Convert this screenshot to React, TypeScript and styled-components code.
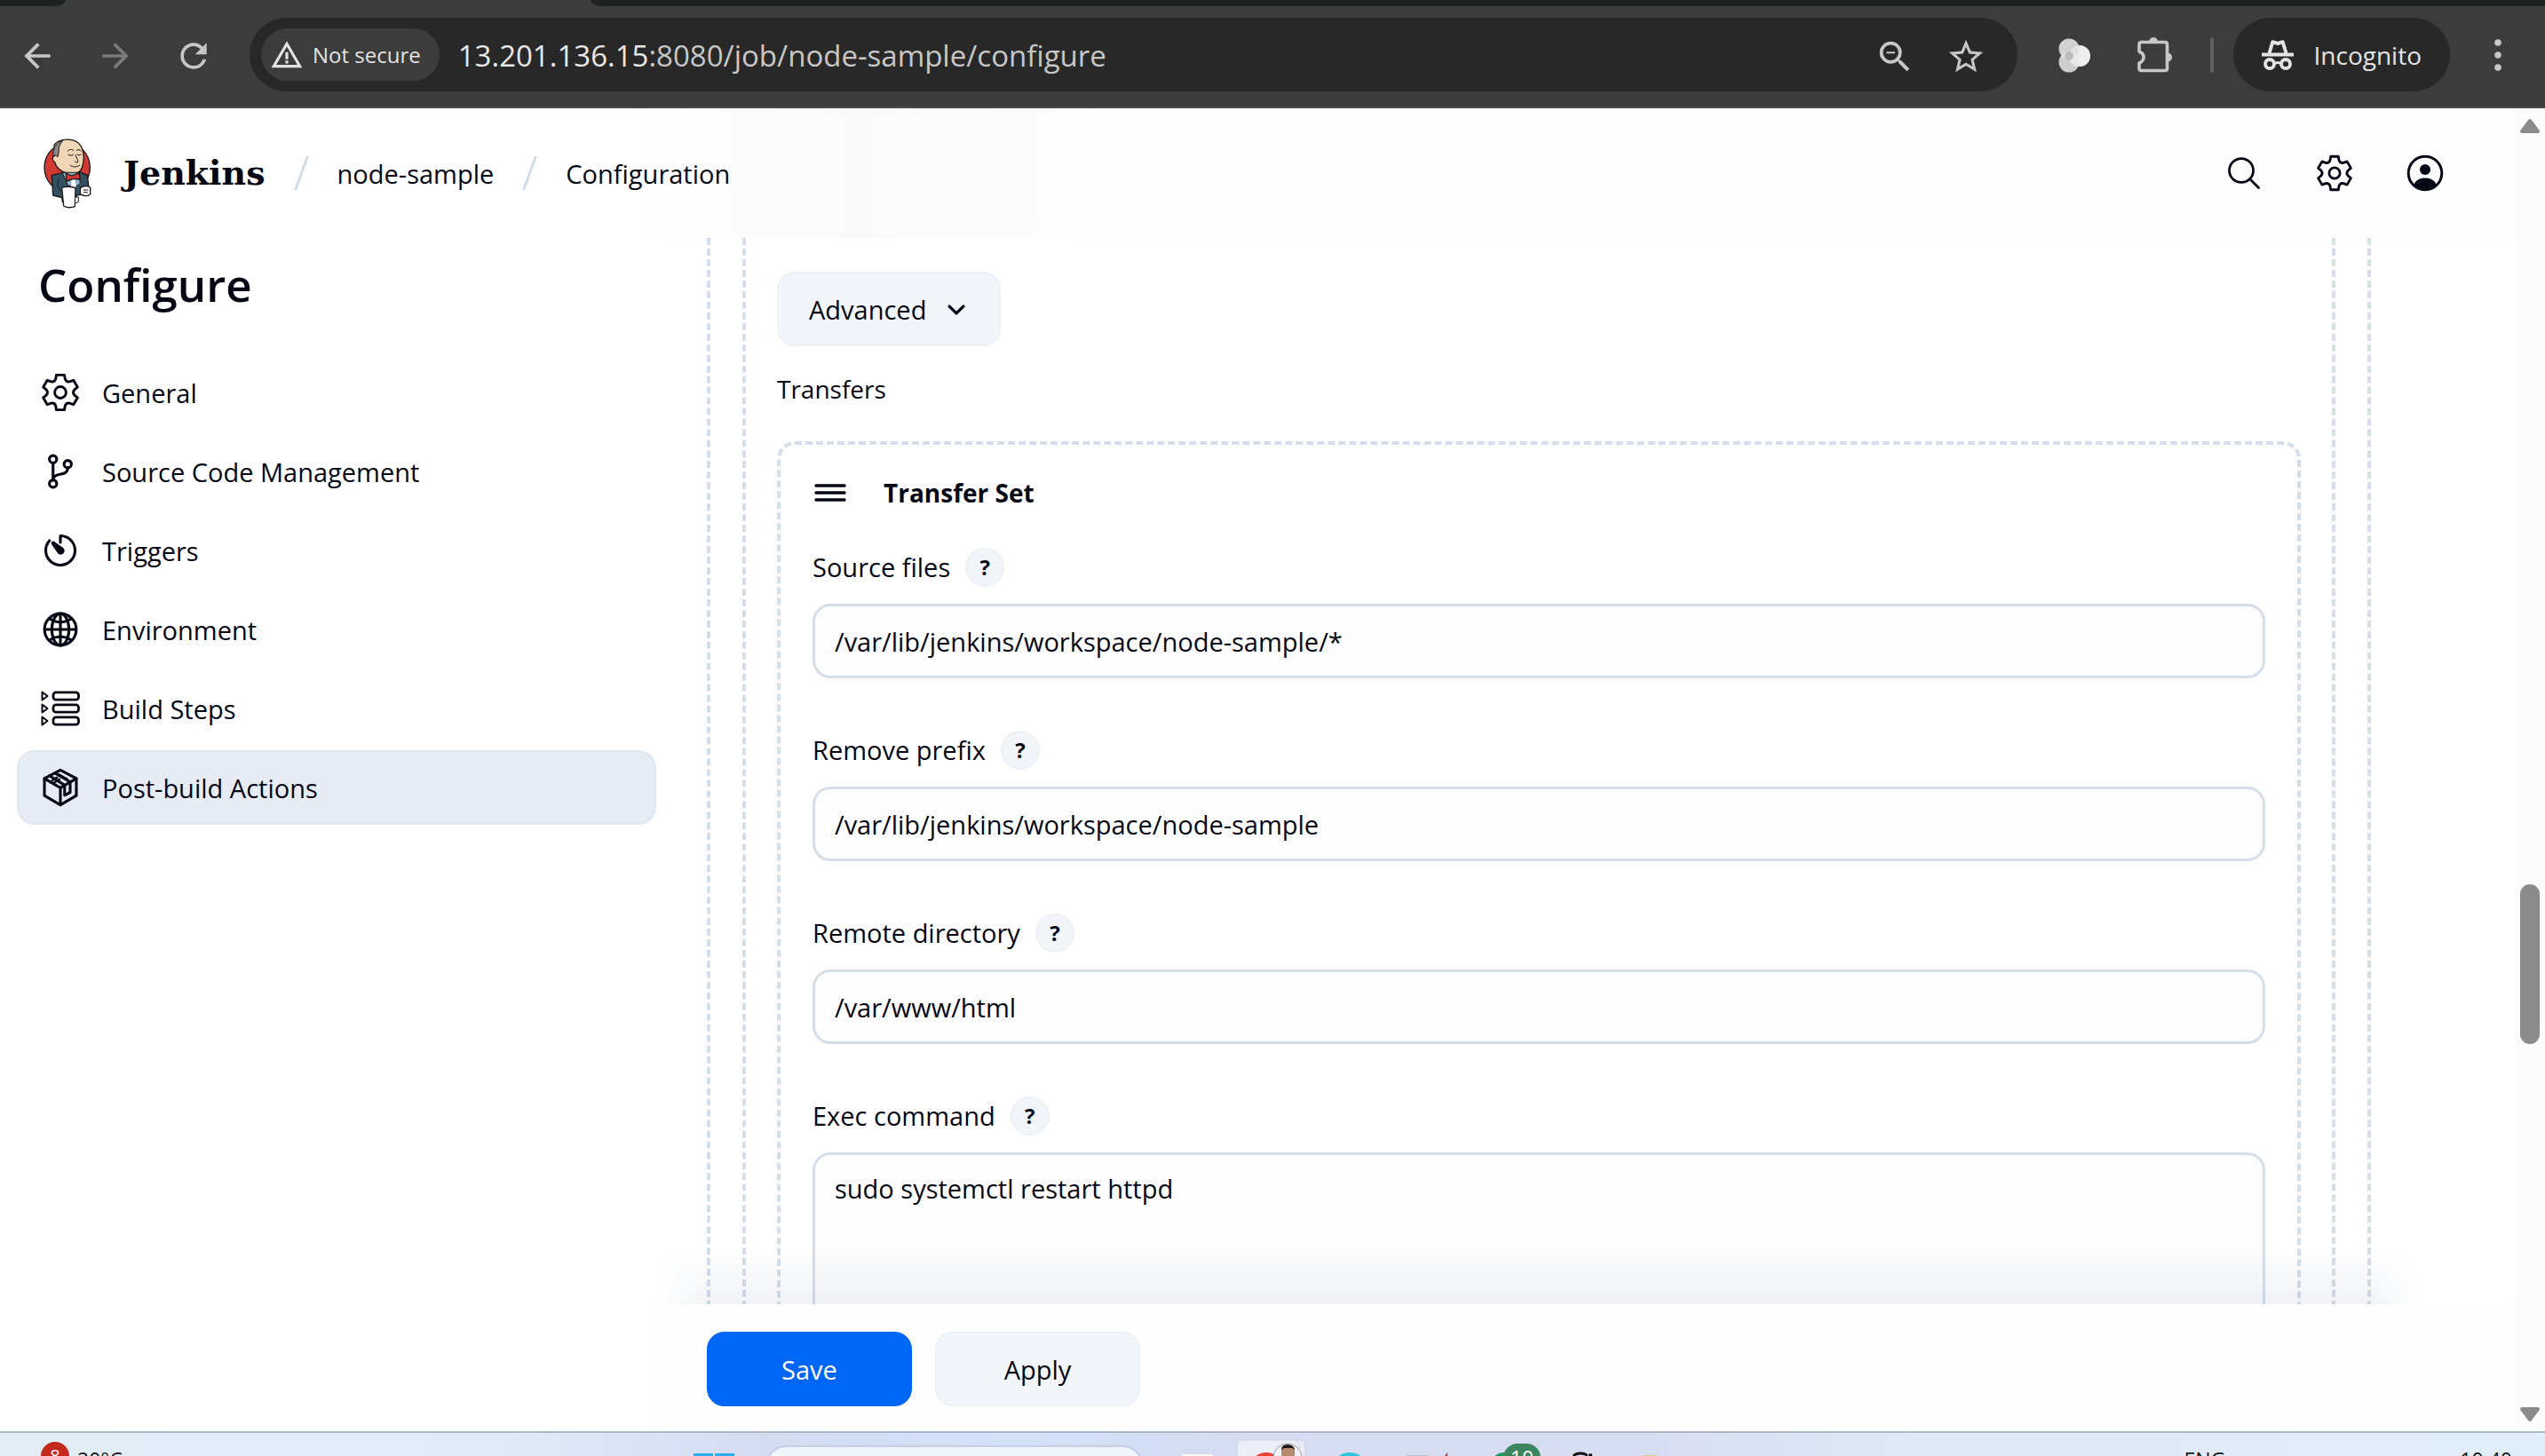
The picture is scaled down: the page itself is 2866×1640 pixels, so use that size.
import React, { useState } from "react";
import styled, { createGlobalStyle, css } from "styled-components";
import {
  IoChevronDownOutline,
  IoGitBranchOutline,
  IoGlobeOutline,
  IoSearchOutline,
  IoTimerOutline,
} from "react-icons/io5";
import {
  MdArrowBack,
  MdArrowForward,
  MdOutlineZoomOut,
  MdRefresh,
  MdStarBorder,
  MdWarningAmber,
} from "react-icons/md";

const ink = "#060714";
const line = "#d6deea";
const soft = "#f2f6fa";
const softEdge = "#edf1f5";
const sans = `"Open Sans", "Noto Sans", sans-serif`;

const GlobalStyle = createGlobalStyle`
  *, *::before, *::after { box-sizing: border-box; }
  body { margin: 0; background: #fff; color: ${ink}; font: 400 29px/44px ${sans}; }
  button, input, textarea { font: inherit; color: inherit; margin: 0; }
  button { border: 0; padding: 0; background: none; cursor: pointer; }
  a { color: inherit; text-decoration: none; }
  h1, h2, p { margin: 0; }
  svg { display: block; flex: none; }
`;

const Screen = styled.div`
  display: flex;
  flex-direction: column;
  height: 100vh;
  overflow: hidden;
`;

/* ---------- browser chrome ---------- */

const TabStrip = styled.div`
  flex: none;
  display: flex;
  justify-content: space-between;
  height: 7px;
  background: #3c3c3c;
`;
const TabEdge = styled.div<{ $side: "left" | "right" }>`
  background: #1f2120;
  ${(p) =>
    p.$side === "left"
      ? css`width: 74px; border-bottom-right-radius: 14px 7px;`
      : css`width: calc(100% - 665px); border-bottom-left-radius: 14px 7px;`}
`;
const Toolbar = styled.header`
  flex: none;
  display: flex;
  align-items: center;
  height: 115px;
  padding: 0 32px 4px 20px;
  background: #3c3c3c;
  border-bottom: 2px solid #484848;
  color: #c7c7c7;
`;
const NavButtons = styled.div`
  display: flex;
  gap: 46px;
  width: 261px;
`;
const ChromeButton = styled.button<{ $dim?: boolean }>`
  display: grid;
  place-items: center;
  width: 42px;
  height: 42px;
  color: ${(p) => (p.$dim ? "#7a7a7a" : "#c7c7c7")};
`;
const Omnibox = styled.div`
  flex: 1;
  display: flex;
  align-items: center;
  height: 83px;
  padding: 0 39px 0 13px;
  border-radius: 42px;
  background: #282828;
`;
const SecurityChip = styled.button`
  display: flex;
  align-items: center;
  gap: 10px;
  height: 59px;
  padding: 0 21px 0 10px;
  border-radius: 30px;
  background: #3c3c3c;
  color: #e3e3e3;
  font-size: 24px;
  font-weight: 500;
`;
const Url = styled.p`
  flex: 1;
  margin-left: 21px;
  padding-top: 2px;
  font-size: 33px;
  color: #c7c7c7;
  b { font-weight: 400; color: #e8e8e8; }
`;
const OmniActions = styled.div`
  display: flex;
  gap: 38px;
`;
const Extensions = styled.div`
  display: flex;
  align-items: center;
  gap: 48px;
  margin-left: 43px;
`;
const Divider = styled.span`
  width: 4px;
  height: 40px;
  margin: 0 22px 0 42px;
  border-radius: 2px;
  background: #5f5f5f;
`;
const IncognitoPill = styled.div`
  display: flex;
  align-items: center;
  gap: 22px;
  height: 83px;
  padding: 0 32px;
  margin-right: 33px;
  border-radius: 42px;
  background: #282828;
  color: #e3e3e3;
  font-size: 28px;
`;

/* ---------- page ---------- */

const Viewport = styled.div`
  flex: 1;
  min-height: 0;
  display: flex;
`;
const Page = styled.div`
  flex: 1;
  min-width: 0;
  display: flex;
  flex-direction: column;
`;
const PageHeader = styled.header`
  flex: none;
  display: flex;
  align-items: center;
  justify-content: space-between;
  height: 146px;
  padding: 0 78px 0 47px;
  background: linear-gradient(90deg, #fff 25%, #fafafa 34%, #fbfbfb 38%, #fefefe 44%);
`;
const Crumbs = styled.nav`
  display: flex;
  align-items: center;
`;
const Brand = styled.a`
  display: flex;
  align-items: center;
  gap: 35px;
  font: 700 38px/44px "DejaVu Serif", serif;
`;
const Crumb = styled.a`
  padding-top: 2px;
`;
const Slash = styled.span`
  width: 3px;
  height: 38px;
  margin: 0 39px;
  background: #d0dbe8;
  transform: skewX(-20deg);
`;
const HeaderActions = styled.div`
  display: flex;
  gap: 58px;
`;
const IconButton = styled.button`
  display: grid;
  place-items: center;
  width: 44px;
  height: 44px;
`;

const Columns = styled.div`
  flex: 1;
  min-height: 0;
  display: flex;
`;
const Sidebar = styled.aside`
  flex: none;
  width: 739px;
  padding: 16px 0 0 19px;
`;
const Title = styled.h1`
  padding-left: 24px;
  font-size: 51px;
  line-height: 72px;
  font-weight: 600;
`;
const TaskList = styled.nav`
  display: grid;
  gap: 5px;
  margin-top: 44px;
`;
const Task = styled.a<{ $active: boolean }>`
  display: flex;
  align-items: center;
  gap: 25px;
  height: 84px;
  padding: 0 25px;
  border: 2px solid ${(p) => (p.$active ? "#e2e7ef" : "transparent")};
  border-radius: 20px;
  background: ${(p) => (p.$active ? "#e7ecf4" : "transparent")};
  svg[stroke-width="0"] * { stroke-width: 36px !important; }
`;
const TaskName = styled.span`
  padding-top: 2px;
`;

const Main = styled.main`
  flex: 1;
  min-width: 0;
  display: flex;
  flex-direction: column;
`;
const Scroller = styled.div`
  flex: 1;
  min-height: 0;
  overflow: hidden;
  padding: 0 161px 0 57px;
`;
const Nest = styled.div`
  padding: 0 36px;
  border: 0 dashed ${line};
  border-width: 0 4px;
`;
const Publisher = styled.section`
  padding: 38px 35px 0;
  height: 1600px;
  border: 0 dashed ${line};
  border-width: 0 4px;
`;
const SoftButton = styled.button`
  display: flex;
  align-items: center;
  justify-content: center;
  gap: 20px;
  height: 84px;
  padding: 2px 34px 0;
  border: 2px solid ${softEdge};
  border-radius: 20px;
  background: ${soft};
  svg * { stroke-width: 60px !important; }
`;
const SectionLabel = styled.h2`
  margin-top: 26px;
  font-size: 28px;
  line-height: 44px;
  font-weight: 400;
`;
const TransferSet = styled.fieldset`
  min-width: 0;
  height: 1400px;
  margin: 37px 0 0;
  padding: 32px 36px 0;
  border: 4px dashed ${line};
  border-radius: 20px;
`;
const SetHeader = styled.div`
  display: flex;
  align-items: center;
  gap: 42px;
  margin-bottom: 40px;
  padding-left: 2px;
  font-weight: 700;
  font-size: 28px;
`;
const Field = styled.div`
  display: grid;
  gap: 19px;
  margin-bottom: 59px;
`;
const LabelRow = styled.div`
  display: flex;
  align-items: center;
  gap: 17px;
`;
const Help = styled.button`
  width: 44px;
  height: 44px;
  border: 2px solid ${softEdge};
  border-radius: 50%;
  background: ${soft};
  font-size: 24px;
  line-height: 36px;
  font-weight: 700;
`;
const box = css`
  display: block;
  width: 100%;
  border: 3px solid ${line};
  border-radius: 20px;
  background: #fdfdfd;
  outline: none;
`;
const TextBox = styled.input`
  ${box}
  height: 84px;
  padding: 0 22px;
`;
const TextArea = styled.textarea`
  ${box}
  height: 260px;
  padding: 16px 22px;
  resize: none;
`;
const BottomBar = styled.div`
  position: relative;
  flex: none;
  display: flex;
  gap: 26px;
  padding: 31px 57px 28px;
  background: #fefefe;
  &::before {
    content: "";
    position: absolute;
    left: 0;
    right: 104px;
    bottom: 100%;
    height: 66px;
    pointer-events: none;
    background: linear-gradient(to top, rgba(60, 80, 140, 0.07), rgba(60, 80, 140, 0));
    mask-image: linear-gradient(90deg, transparent, #000 64px, #000 calc(100% - 64px), transparent);
  }
`;
const FormButton = styled.button<{ $primary?: boolean }>`
  width: 231px;
  height: 84px;
  padding-top: 2px;
  border: 2px solid ${(p) => (p.$primary ? "#0066f5" : softEdge)};
  border-radius: 20px;
  background: ${(p) => (p.$primary ? "#0066f5" : soft)};
  color: ${(p) => (p.$primary ? "#fff" : ink)};
`;

const ScrollTrack = styled.div`
  flex: none;
  display: flex;
  flex-direction: column;
  align-items: center;
  justify-content: space-between;
  width: 35px;
  padding: 11px 0 10px;
  background: #fcfcfc;
`;
const Rail = styled.div`
  flex: 1;
  display: flex;
  flex-direction: column;
  width: 22px;
  &::before { content: ""; flex: 845 0 0; }
  &::after { content: ""; flex: 408 0 0; }
`;
const Thumb = styled.div`
  flex: 180 0 0;
  border-radius: 11px;
  background: #8b8b8b;
`;

/* ---------- taskbar ---------- */

const Taskbar = styled.footer`
  flex: none;
  display: flex;
  justify-content: space-between;
  height: 28px;
  overflow: hidden;
  border-top: 2px solid #aeb7c5;
  background: linear-gradient(90deg, #e2edf6 0%, #e0ebf6 20%, #d5dcf2 30%, #d2e2f8 40%, #d6dcf1 48%, #d8def1 65%, #dfe9f4 75%, #e1edf8 100%);
  color: #1a1a1a;
  font-size: 23px;
  line-height: 32px;
`;
const Weather = styled.div`
  display: flex;
  gap: 9px;
  width: 761px;
  padding: 10px 0 0 46px;
`;
const Badge = styled.span<{ $color: string }>`
  flex: none;
  width: 32px;
  height: 32px;
  border-radius: 16px;
  background: ${(p) => p.$color};
  color: #fff;
  font-size: 20px;
  text-align: center;
`;
const Temp = styled.span`
  padding-top: 4px;
`;
const Dock = styled.div`
  display: flex;
  gap: 14px;
`;
const Apps = styled.div`
  display: flex;
`;
const Slot = styled.div`
  position: relative;
  width: 87px;
`;
const CountBadge = styled(Badge)`
  position: absolute;
  left: 43px;
  top: 12px;
  width: 42px;
  font-size: 23px;
`;
const SearchPill = styled.div`
  width: 426px;
  height: 60px;
  margin-top: 14px;
  border: 2px solid #c5cfe6;
  border-radius: 24px;
  background: #f1f6fd;
`;
const Tray = styled.div`
  flex: 1;
  display: flex;
  justify-content: flex-end;
  gap: 264px;
  padding: 14px 37px 0 0;
`;

/* ---------- drawings ---------- */

const gearPath = (() => {
  const at = (deg: number, r: number) => {
    const a = (deg * Math.PI) / 180;
    return `${(12 + r * Math.sin(a)).toFixed(2)} ${(12 - r * Math.cos(a)).toFixed(2)}`;
  };
  let d = "";
  for (let i = 0; i < 6; i++) {
    const a = i * 60;
    d += `${i ? "L" : "M"}${at(a - 13, 11)}L${at(a + 13, 11)}L${at(a + 19, 8.8)}Q${at(a + 30, 7.2)} ${at(a + 41, 8.8)}`;
  }
  return d + "Z";
})();

const Gear = ({ size }: { size: number }) => (
  <svg width={size} height={size} viewBox="0 0 24 24" fill="none" stroke="currentColor" strokeWidth="1.6" strokeLinejoin="round">
    <path d={gearPath} />
    <circle cx="12" cy="12" r="3.5" />
  </svg>
);

const Steps = () => (
  <svg width="44" height="44" viewBox="0 0 44 44" fill="none" stroke="currentColor" strokeWidth="2.8" strokeLinejoin="round">
    {[8, 22, 36].map((y) => (
      <g key={y}>
        <path d={`M1.5 ${y - 4.5}V${y + 4.5}L7.5 ${y}Z`} strokeWidth="2" />
        <rect x="14" y={y - 4.2} width="28.5" height="8.4" rx="3" />
      </g>
    ))}
  </svg>
);

const Package = () => (
  <svg width="44" height="44" viewBox="0 0 24 24" fill="none" stroke="currentColor" strokeWidth="1.7" strokeLinejoin="round" strokeLinecap="round">
    <path d="M12 1.3 21.8 6.5V17L12 22.7 2.2 17V6.5Z" />
    <path d="M2.2 6.5 12 12.2 21.8 6.5M12 12.2V22.7" />
    <path d="M5.3 4.8 14.6 10.6V16.8L18 15V8.6L8.6 3.1" />
    <path d="M7 7.6 10 5.8M11.3 4.1 16.3 7M8.4 8.9 11.5 7" strokeWidth="1.3" />
  </svg>
);

const Person = () => (
  <svg width="42" height="42" viewBox="0 0 42 42">
    <circle cx="21" cy="21" r="18.8" fill="none" stroke="currentColor" strokeWidth="3" />
    <circle cx="21" cy="17" r="6" fill="currentColor" />
    <path d="M8.5 34C10 29 15 26.500 21 26.500S32 29 33.500 34A19 19 0 0 1 8.500 34Z" fill="currentColor" />
  </svg>
);

const Menu = () => (
  <svg width="36" height="22" viewBox="0 0 36 22" stroke="currentColor" strokeWidth="3.4" strokeLinecap="round">
    <path d="M2 3H34M2 11H34M2 19H34" />
  </svg>
);

const Butler = () => (
  <svg width="57" height="79" viewBox="50 48 171 237" strokeLinejoin="round" strokeLinecap="round">
    <ellipse cx="136" cy="146" rx="77" ry="82" fill="#d33833" stroke="#1d1919" strokeWidth="4" />
    <path d="M84 172 122 164 176 160 204 172 208 206 190 236 168 240 166 262 120 262 118 248 88 240Z" fill="#335061" stroke="#1d1919" strokeWidth="4" />
    <path d="M92 70C108 46 166 42 184 76C194 100 194 124 186 146C178 166 158 172 140 168C116 162 98 146 94 128C84 122 84 108 94 106Z" fill="#f0d6b7" stroke="#1d1919" strokeWidth="4" />
    <path d="M88 108C88 82 96 62 122 54C112 66 106 78 108 92L104 110C98 104 92 104 88 108Z" fill="#8a8786" stroke="#1d1919" strokeWidth="3" />
    <path d="M140 102C144 106 150 107 156 103M170 102C174 105 178 105 182 102M164 104C168 114 174 124 172 128C168 130 164 128 162 126M146 138C154 146 168 146 178 138M138 90C144 84 152 84 157 88M168 88C174 84 180 86 182 90" fill="none" stroke="#1d1919" strokeWidth="3" />
    <path d="M120 164 138 206 160 214 180 200 176 164Z" fill="#8fb4cf" stroke="#1d1919" strokeWidth="3" />
    <path d="M150 184 162 184 166 212 150 210Z" fill="#fff" />
    <path d="M132 166 152 174 176 164 180 186 158 184 134 192Z" fill="#d33833" stroke="#1d1919" strokeWidth="4" />
    <path d="M118 214C130 210 154 210 164 216L162 278C150 282 134 282 124 276Z" fill="#fff" stroke="#1d1919" strokeWidth="4" />
    <path d="M180 216C190 206 212 206 214 216L214 236C206 246 190 242 180 236Z" fill="#fff" stroke="#1d1919" strokeWidth="4" />
    <path d="M164 246H174V262L164 266" fill="#fff" stroke="#1d1919" strokeWidth="3" />
    <path d="M192 222H206M192 230H204M106 184C102 200 104 220 116 226" fill="none" stroke="#1d1919" strokeWidth="3" />
  </svg>
);

const Blob = () => (
  <svg width="42" height="42" viewBox="0 0 42 42">
    <circle cx="27" cy="22" r="12" fill="#efefef" />
    <circle cx="15" cy="14" r="11.500" fill="#dedede" fillOpacity="0.92" />
    <circle cx="15" cy="29" r="11.500" fill="#e8e8e8" fillOpacity="0.85" />
    <circle cx="15" cy="22" r="5" fill="#bdbdbd" />
  </svg>
);

const Puzzle = () => (
  <svg width="42" height="42" viewBox="0 0 42 42">
    <path d="M4 17V9Q4 6.500 6.500 6.500H33Q35.500 6.500 35.500 9V36Q35.500 38.500 33 38.500H6.500Q4 38.500 4 36V30Q9 28 9 23.500T4 17Z" fill="none" stroke="currentColor" strokeWidth="3.600" strokeLinejoin="round" />
    <path d="M15 6A5 5 0 0 1 25 6ZM36 18.500A5 5 0 0 1 36 28.500Z" fill="currentColor" />
  </svg>
);

const Incognito = () => (
  <svg width="36" height="36" viewBox="0 0 36 36" fill="none" stroke="currentColor">
    <path d="M8.500 16 12.300 3.200 18 5 23.700 3.200 27.500 16" strokeWidth="4" strokeLinejoin="round" />
    <path d="M0 17.500H36" strokeWidth="4" />
    <circle cx="9" cy="28" r="5" strokeWidth="3.800" />
    <circle cx="27" cy="28" r="5" strokeWidth="3.800" />
    <path d="M14 28Q18 25 22 28" strokeWidth="3" />
  </svg>
);

const Kebab = () => (
  <svg width="8" height="38" viewBox="0 0 8 38" fill="currentColor">
    <circle cx="4" cy="5" r="3.800" />
    <circle cx="4" cy="19" r="3.800" />
    <circle cx="4" cy="33" r="3.800" />
  </svg>
);

const Arrow = ({ down }: { down?: boolean }) => (
  <svg width="24" height="18" viewBox="0 0 24 18" fill="#8b8b8b" stroke="#8b8b8b" strokeWidth="4" strokeLinejoin="round">
    <path d={down ? "M3 3H21L12 15Z" : "M3 15H21L12 3Z"} />
  </svg>
);

const Art = ({ children }: { children: React.ReactNode }) => (
  <svg width="87" height="26" viewBox="0 0 87 26">{children}</svg>
);

/* ---------- content ---------- */

const tasks = [
  { name: "General", icon: <Gear size={44} /> },
  { name: "Source Code Management", icon: <IoGitBranchOutline size={44} /> },
  { name: "Triggers", icon: <IoTimerOutline size={44} /> },
  { name: "Environment", icon: <IoGlobeOutline size={44} /> },
  { name: "Build Steps", icon: <Steps /> },
  { name: "Post-build Actions", icon: <Package /> },
];

const fields = [
  { id: "sourceFiles", label: "Source files", value: "/var/lib/jenkins/workspace/node-sample/*" },
  { id: "removePrefix", label: "Remove prefix", value: "/var/lib/jenkins/workspace/node-sample" },
  { id: "remoteDirectory", label: "Remote directory", value: "/var/www/html" },
  { id: "execCommand", label: "Exec command", value: "sudo systemctl restart httpd", multiline: true },
];

export default function App() {
  const [active, setActive] = useState("Post-build Actions");

  return (
    <Screen>
      <GlobalStyle />
      <TabStrip>
        <TabEdge $side="left" />
        <TabEdge $side="right" />
      </TabStrip>
      <Toolbar>
        <NavButtons>
          <ChromeButton aria-label="Back"><MdArrowBack size={44} /></ChromeButton>
          <ChromeButton aria-label="Forward" $dim><MdArrowForward size={44} /></ChromeButton>
          <ChromeButton aria-label="Reload"><MdRefresh size={44} /></ChromeButton>
        </NavButtons>
        <Omnibox>
          <SecurityChip><MdWarningAmber size={38} />Not secure</SecurityChip>
          <Url><b>13.201.136.15</b>:8080/job/node-sample/configure</Url>
          <OmniActions>
            <ChromeButton aria-label="Zoom"><MdOutlineZoomOut size={46} /></ChromeButton>
            <ChromeButton aria-label="Bookmark"><MdStarBorder size={46} /></ChromeButton>
          </OmniActions>
        </Omnibox>
        <Extensions>
          <ChromeButton aria-label="Extension"><Blob /></ChromeButton>
          <ChromeButton aria-label="Extensions"><Puzzle /></ChromeButton>
        </Extensions>
        <Divider />
        <IncognitoPill><Incognito />Incognito</IncognitoPill>
        <ChromeButton aria-label="Menu"><Kebab /></ChromeButton>
      </Toolbar>

      <Viewport>
        <Page>
          <PageHeader>
            <Crumbs>
              <Brand href="#"><Butler />Jenkins</Brand>
              <Slash />
              <Crumb href="#node-sample">node-sample</Crumb>
              <Slash />
              <Crumb href="#configuration">Configuration</Crumb>
            </Crumbs>
            <HeaderActions>
              <IconButton aria-label="Search"><IoSearchOutline size={44} /></IconButton>
              <IconButton aria-label="Manage"><Gear size={42} /></IconButton>
              <IconButton aria-label="Account"><Person /></IconButton>
            </HeaderActions>
          </PageHeader>

          <Columns>
            <Sidebar>
              <Title>Configure</Title>
              <TaskList>
                {tasks.map((t) => (
                  <Task key={t.name} href="#" $active={t.name === active} onClick={() => setActive(t.name)}>
                    {t.icon}
                    <TaskName>{t.name}</TaskName>
                  </Task>
                ))}
              </TaskList>
            </Sidebar>

            <Main>
              <Scroller>
                <Nest>
                  <Publisher>
                    <SoftButton>Advanced<IoChevronDownOutline size={28} /></SoftButton>
                    <SectionLabel>Transfers</SectionLabel>
                    <TransferSet>
                      <SetHeader><Menu />Transfer Set</SetHeader>
                      {fields.map((f) => (
                        <Field key={f.id}>
                          <LabelRow>
                            <label htmlFor={f.id}>{f.label}</label>
                            <Help aria-label={`Help for ${f.label}`}>?</Help>
                          </LabelRow>
                          {f.multiline ? (
                            <TextArea id={f.id} defaultValue={f.value} />
                          ) : (
                            <TextBox id={f.id} defaultValue={f.value} />
                          )}
                        </Field>
                      ))}
                    </TransferSet>
                  </Publisher>
                </Nest>
              </Scroller>
              <BottomBar>
                <FormButton $primary>Save</FormButton>
                <FormButton>Apply</FormButton>
              </BottomBar>
            </Main>
          </Columns>
        </Page>
        <ScrollTrack>
          <Arrow />
          <Rail><Thumb /></Rail>
          <Arrow down />
        </ScrollTrack>
      </Viewport>

      <Taskbar>
        <Weather>
          <Badge $color="#c42b1c">8</Badge>
          <Temp>20°C</Temp>
        </Weather>
        <Dock>
          <Slot>
            <Art><path d="M20 23H42V26H20ZM44 23H66V26H44Z" fill="#2eaef0" /></Art>
          </Slot>
          <SearchPill />
          <Apps>
            <Slot><Art><rect x="29" y="24" width="35" height="4" fill="#fafafa" /></Art></Slot>
            <Slot>
              <Art>
                <rect x="12" y="8" width="69" height="40" rx="6" fill="#ececf6" stroke="#cdd2e8" />
                <rect x="4" y="8" width="70" height="40" rx="6" fill="#eceef8" stroke="#cdd2e8" />
                <circle cx="37" cy="41" r="19" fill="#ea4335" />
                <circle cx="61" cy="28" r="16" fill="#f3f3f3" stroke="#9aa0a6" />
                <path d="M54 26V18Q56 13 62 14T69 18V26Z" fill="#b78a6e" />
                <path d="M54 19Q54 13 61 13T69 19L66 17H57Z" fill="#1c1a1a" />
              </Art>
            </Slot>
            <Slot><Art><circle cx="44" cy="42" r="20" fill="#2cc3dc" /></Art></Slot>
            <Slot><Art><path d="M21 25H45V26H21Z" fill="#b9bfc9" /><path d="M64 26 67 22V26Z" fill="#a4373a" /></Art></Slot>
            <Slot>
              <Art><circle cx="44" cy="38" r="16" fill="#1d9b5e" /></Art>
              <CountBadge $color="#3d8760">10</CountBadge>
            </Slot>
            <Slot><Art><path d="M35 26Q37 23 43 23T50 26M52 25H56" fill="none" stroke="#111" strokeWidth="3" /></Art></Slot>
            <Slot><Art><rect x="26" y="25" width="16" height="1" fill="#d9cf9a" /></Art></Slot>
          </Apps>
        </Dock>
        <Tray>
          <span>ENG</span>
          <span>10:40</span>
        </Tray>
      </Taskbar>
    </Screen>
  );
}
